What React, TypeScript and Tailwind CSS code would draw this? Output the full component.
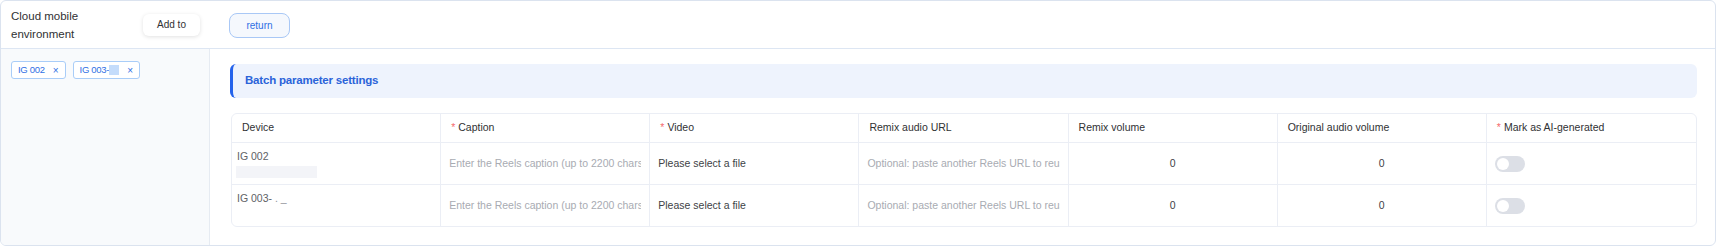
import React from 'react';

interface Row {
    device: string;
    masked: boolean;
}

const rows: Row[] = [
    { device: 'IG 002', masked: true },
    { device: 'IG 003-', masked: false },
];

const font = { fontFamily: '"Liberation Sans", Arial, sans-serif' };

const Star = () => <span className="text-[#f56c6c] mr-[3px]">*</span>;

const Toggle = () => (
    <div className="w-[30px] h-[16px] rounded-full bg-[#dcdfe6] flex items-center px-[2px]">
        <div className="w-[12px] h-[12px] rounded-full bg-white" />
    </div>
);

const App: React.FC = () => {
    const headCell = 'h-[29px] border-b border-r border-[#ebeef5] flex items-center pl-[10px] text-[#303133]';
    const bodyCell = 'border-r border-[#ebeef5] flex items-center';
    const inputCls = 'w-full bg-transparent outline-none text-[10.5px] text-[#404246] placeholder:text-[#a8abb2]';

    return (
        <div style={font} className="w-[1716px] h-[246px] bg-white">
            <div className="w-full h-full border border-[#dbe3ef] rounded-md flex flex-col overflow-hidden">
                {/* Header */}
                <div className="h-[48px] border-b border-[#dde6f3] flex items-center shrink-0">
                    <div className="w-[209px] flex items-center pl-[10px]">
                        <div className="w-[120px] text-[11.5px] leading-[18px] text-[#303133]">
                            Cloud mobile environment
                        </div>
                        <button className="ml-[12px] w-[57px] h-[22px] rounded-md bg-white shadow-[0_1px_4px_rgba(0,0,0,0.12)] text-[10px] text-[#303133]">
                            Add to
                        </button>
                    </div>
                    <div className="pl-[19px]">
                        <button className="w-[61px] h-[25px] rounded-lg border border-[#a9c8f6] bg-[#f5f8fd] text-[10px] text-[#2f6fe4]">
                            return
                        </button>
                    </div>
                </div>

                {/* Body */}
                <div className="flex flex-1 min-h-0">
                    {/* Sidebar */}
                    <div className="w-[209px] shrink-0 bg-[#f8fafc] border-r border-[#e6ebf2] pt-[12px] pl-[10px]">
                        <div className="flex gap-[7px]">
                            <div className="h-[18px] pl-[6px] pr-[6px] flex items-center gap-[8px] bg-white border border-[#a9cdf8] rounded-[3px] text-[9.5px] text-[#2f6fe4]">
                                <span className="tracking-[-0.3px]">IG 002</span>
                                <span className="text-[10px]">×</span>
                            </div>
                            <div className="h-[18px] pl-[6px] pr-[6px] flex items-center gap-[8px] bg-white border border-[#a9cdf8] rounded-[3px] text-[9.5px] text-[#2f6fe4]">
                                <span className="flex items-center tracking-[-0.3px]">
                                    IG 003-
                                    <span className="inline-block w-[10px] h-[10px] bg-[#c4dcfb]" />
                                </span>
                                <span className="text-[10px]">×</span>
                            </div>
                        </div>
                    </div>

                    {/* Main */}
                    <div className="flex-1 pt-[15px] pl-[20px] pr-[18px]">
                        <div className="h-[34px] rounded-md bg-[#eef3fd] border-l-[3px] border-[#2563eb] flex items-center pl-[12px]">
                            <span className="text-[11.5px] font-semibold tracking-[-0.2px] text-[#2b63d9]">
                                Batch parameter settings
                            </span>
                        </div>

                        <div className="mt-[15px] ml-[1px] border border-[#ebeef5] rounded-md overflow-hidden text-[10.5px]">
                            <div className="grid grid-cols-7">
                                <div className={headCell}>Device</div>
                                <div className={headCell}><Star />Caption</div>
                                <div className={headCell}><Star />Video</div>
                                <div className={headCell}>Remix audio URL</div>
                                <div className={headCell}>Remix volume</div>
                                <div className={headCell}>Original audio volume</div>
                                <div className={headCell + ' border-r-0'}><Star />Mark as AI-generated</div>

                                {rows.map((r, i) => {
                                    const rowH = i === 0 ? 'h-[42px] border-b' : 'h-[41px]';
                                    return (
                                        <React.Fragment key={i}>
                                            <div className={`${rowH} border-r border-[#ebeef5] pl-[4px] pt-[5px] text-[#606266]`}>
                                                <div className="leading-[16px] pl-[1px]">
                                                    {r.device}
                                                    {!r.masked && <span className="text-[#909399] ml-[3px]">. _</span>}
                                                </div>
                                                {r.masked && <div className="mt-[2px] w-[81px] h-[12px] bg-[#f3f4f8]" />}
                                            </div>
                                            <div className={`${rowH} ${bodyCell} px-[8px]`}>
                                                <input className={inputCls} placeholder="Enter the Reels caption (up to 2200 chars)" />
                                            </div>
                                            <div className={`${rowH} ${bodyCell} px-[8px] text-[#404246]`}>
                                                Please select a file
                                            </div>
                                            <div className={`${rowH} ${bodyCell} px-[8px]`}>
                                                <input className={inputCls} placeholder="Optional: paste another Reels URL to reuse its audio" />
                                            </div>
                                            <div className={`${rowH} ${bodyCell} justify-center text-[#404246]`}>
                                                0
                                            </div>
                                            <div className={`${rowH} ${bodyCell} justify-center text-[#404246]`}>
                                                0
                                            </div>
                                            <div className={`${rowH} border-[#ebeef5] flex items-center pl-[8px]`}>
                                                <Toggle />
                                            </div>
                                        </React.Fragment>
                                    );
                                })}
                            </div>
                        </div>
                    </div>
                </div>
            </div>
        </div>
    );
};

export default App;
